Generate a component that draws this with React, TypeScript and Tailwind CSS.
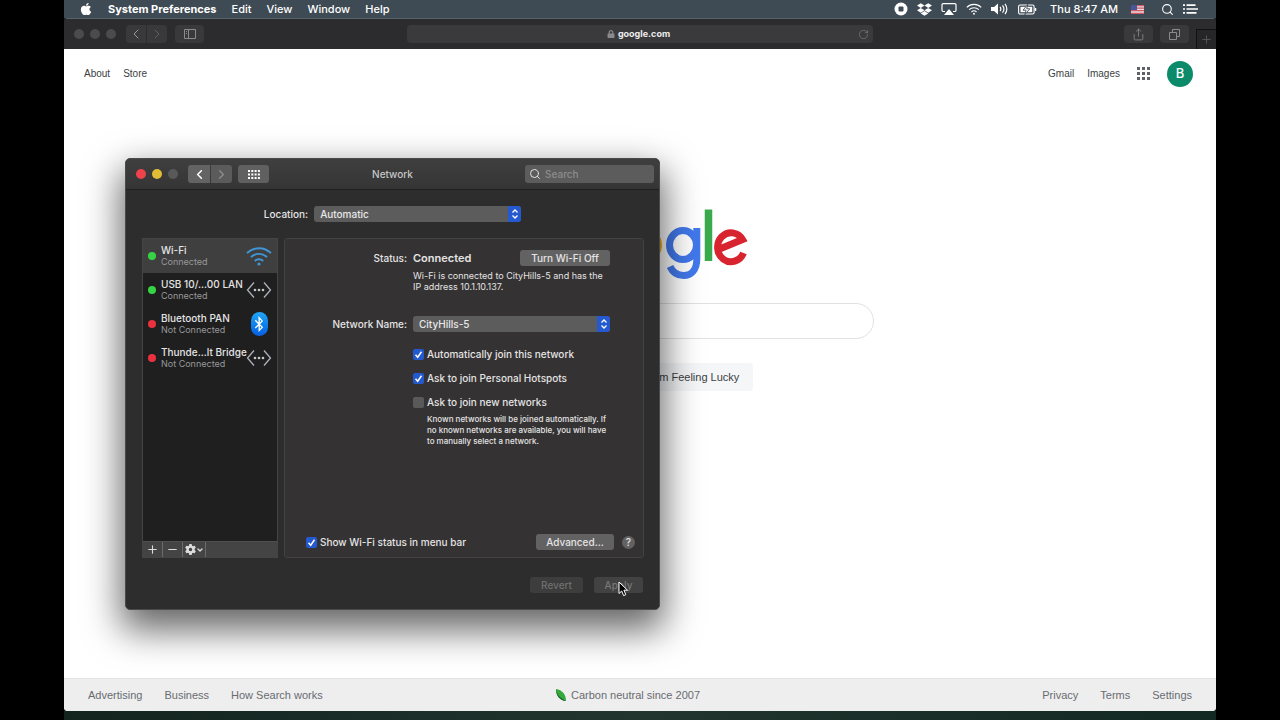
import type { ReactNode } from 'react'
import { ChevronDown, ChevronLeft, ChevronRight, Minus, Plus, RotateCw, Search, Share } from 'lucide-react'
import { FaApple, FaBluetoothB, FaDropbox, FaLock } from 'react-icons/fa'
import { FaGear } from 'react-icons/fa6'

interface Service {
    name: string
    status: string
    online: boolean
    icon: ReactNode
}

const WifiIcon = ({ className }: { className: string }) => (
    <svg viewBox="0 0 26 20" fill="none" stroke="currentColor" className={className}>
        <path d="M1 7.2a17 17 0 0 1 24 0" strokeWidth="1.9" />
        <path d="M5 11.2a11.3 11.3 0 0 1 16 0" strokeWidth="1.9" />
        <path d="M8.8 15a6 6 0 0 1 8.4 0" strokeWidth="1.9" />
        <circle cx="13" cy="18" r="1.6" fill="currentColor" stroke="none" />
    </svg>
)

const EthernetIcon = () => (
    <svg viewBox="0 0 26 18" fill="none" stroke="#aeb2bb" strokeWidth="1.3" className="h-[18px] w-[26px]">
        <path d="M8 1.5 1.5 9 8 16.5M18 1.5 24.5 9 18 16.5" />
        <g fill="#c4c6cc" stroke="none">
            <circle cx="9" cy="9" r="1.3" />
            <circle cx="13" cy="9" r="1.3" />
            <circle cx="17" cy="9" r="1.3" />
        </g>
    </svg>
)

const BluetoothIcon = () => (
    <div className="flex h-6 w-[17px] items-center justify-center rounded-full bg-gradient-to-b from-[#23a6f7] to-[#0a5fe0] text-white">
        <FaBluetoothB size={16} />
    </div>
)

const services: Service[] = [
    { name: 'Wi-Fi', status: 'Connected', online: true, icon: <WifiIcon className="h-5 w-[26px] text-[#3f97d6]" /> },
    { name: 'USB 10/...00 LAN', status: 'Connected', online: true, icon: <EthernetIcon /> },
    { name: 'Bluetooth PAN', status: 'Not Connected', online: false, icon: <BluetoothIcon /> },
    { name: 'Thunde...lt Bridge', status: 'Not Connected', online: false, icon: <EthernetIcon /> },
]

const RecordIcon = () => (
    <svg viewBox="0 0 14 14" className="size-[14px]">
        <circle cx="7" cy="7" r="6.5" fill="white" />
        <rect x="4.5" y="4.5" width="5" height="5" rx="1" fill="#3e4a54" />
    </svg>
)

const AirplayIcon = () => (
    <svg viewBox="0 0 16 12" fill="none" stroke="white" strokeWidth="1.2" className="h-3 w-4">
        <path d="M4 8.5H2.2A1.2 1.2 0 0 1 1 7.3V1.8A1.2 1.2 0 0 1 2.2.6h11.6A1.2 1.2 0 0 1 15 1.8v5.5a1.2 1.2 0 0 1-1.2 1.2H12" />
        <path d="M8 6 13 12H3Z" fill="white" stroke="none" />
    </svg>
)

const VolumeIcon = () => (
    <svg viewBox="0 0 18 12" fill="none" stroke="white" strokeWidth="1.2" className="h-3 w-[18px]">
        <path d="M0 4h3l4-3.5v11L3 8H0Z" fill="white" stroke="none" />
        <path d="M9 4a3 3 0 0 1 0 4M11.5 2.3a6 6 0 0 1 0 7.4M14 .8a9 9 0 0 1 0 10.4" />
    </svg>
)

const BatteryIcon = () => (
    <svg viewBox="0 0 19 11" fill="none" stroke="white" className="h-[11px] w-[19px]">
        <rect x=".6" y="1" width="15.5" height="9" rx="1.5" strokeWidth="1.1" />
        <rect x="2.5" y="2.8" width="11.7" height="5.4" fill="white" stroke="none" />
        <path d="M17.5 4v3" strokeWidth="1.5" />
        <path d="M9.8.3 5 6.2h3L6.9 10.7 11.8 4.8H8.7Z" fill="white" stroke="#3e4a54" strokeWidth=".9" />
    </svg>
)

const ListIcon = () => (
    <svg viewBox="0 0 15 10" stroke="white" strokeWidth="1.7" className="h-2.5 w-[15px]">
        <path d="M0 1.2h2M3.5 1.2h9M0 5h2M3.5 5H15M0 8.8h2M3.5 8.8h10" />
    </svg>
)

const Flag = () => (
    <svg viewBox="0 0 13 9" className="h-[9px] w-[13px]">
        <rect width="13" height="9" fill="#e9d9dc" />
        <path d="M0 .6h13M0 3.1h13M0 5.7h13M0 8.3h13" stroke="#cf5a66" strokeWidth="1.2" />
        <rect width="6" height="5" fill="#46589a" />
    </svg>
)

const MenuBar = () => (
    <header className="flex h-[18px] items-center justify-between bg-[#3e4a54] pr-[18px] pl-[15px] text-[11px] font-medium text-white">
        <nav className="flex items-center gap-[15px]">
            <FaApple size={14} />
            <span className="font-bold">System Preferences</span>
            <span>Edit</span>
            <span>View</span>
            <span>Window</span>
            <span>Help</span>
        </nav>
        <div className="flex items-center gap-[9px]">
            <RecordIcon />
            <FaDropbox size={15} />
            <AirplayIcon />
            <WifiIcon className="h-3 w-4" />
            <VolumeIcon />
            <BatteryIcon />
            <span className="pr-1 pl-1">Thu 8:47 AM</span>
            <Flag />
            <Search size={13} className="ml-2" />
            <ListIcon />
        </div>
    </header>
)

const BrowserButton = ({ label, children }: { label: string, children: ReactNode }) => (
    <button aria-label={label} className="flex h-[18px] w-[29px] items-center justify-center rounded bg-[#39393b] text-[#8b8b8d]">{children}</button>
)

const BrowserToolbar = () => (
    <div className="flex h-[31px] items-center border-t border-[#59616a] bg-[#2c2c2e]">
        <div className="flex flex-1 items-center">
            <div className="ml-2.5 flex gap-1.5">
                <span className="size-2.5 rounded-full bg-[#4b4b4d]" />
                <span className="size-2.5 rounded-full bg-[#4b4b4d]" />
                <span className="size-2.5 rounded-full bg-[#4b4b4d]" />
            </div>
            <div className="mr-2 ml-2.5 flex gap-px">
                <button aria-label="Back" className="flex h-[18px] w-5 items-center justify-center rounded-l bg-[#39393b] text-[#98989a]"><ChevronLeft size={16} strokeWidth={1.5} /></button>
                <button aria-label="Forward" className="flex h-[18px] w-5 items-center justify-center rounded-r bg-[#39393b] text-[#606062]"><ChevronRight size={16} strokeWidth={1.5} /></button>
            </div>
            <BrowserButton label="Sidebar">
                <svg viewBox="0 0 12 10" fill="none" stroke="currentColor" className="h-2.5 w-3">
                    <path d="M.5.5h11v9H.5ZM4.5.5v9M2 2.5h1M2 4.5h1" />
                </svg>
            </BrowserButton>
        </div>
        <div className="flex h-[18px] w-[466px] items-center rounded bg-[#3a3a3c] px-1">
            <div className="flex flex-1 items-center justify-center gap-[3px] pl-2 text-[9px] font-bold text-[#ececec]">
                <FaLock size={8} className="text-[#8a8a8c]" />
                google.com
            </div>
            <button aria-label="Reload" className="text-[#7d7d7f]"><RotateCw size={11} strokeWidth={1.5} /></button>
        </div>
        <div className="flex flex-1 items-center justify-end gap-[7px] self-stretch">
            <BrowserButton label="Share"><Share size={13} strokeWidth={1.5} /></BrowserButton>
            <BrowserButton label="Show tabs">
                <svg viewBox="0 0 11 11" fill="none" stroke="currentColor" className="size-[11px]">
                    <path d="M.5 3.5h7v7h-7ZM3.5 3.5v-3h7v7h-3" />
                </svg>
            </BrowserButton>
            <button aria-label="New tab" className="flex h-5 w-5 items-center justify-center self-end border-t border-l border-[#111112] bg-[#262628] text-[#5c5c5e]"><Plus size={13} strokeWidth={1.5} /></button>
        </div>
    </div>
)

const GoogleLogo = () => (
    <svg viewBox="0 0 215 72" fill="none" strokeWidth="7" className="h-[72px] w-[215px]" role="img" aria-label="Google">
        <path d="M46 13A24 24 0 1 0 51.5 33H28" stroke="#4279ec" />
        <circle cx="73" cy="36" r="14.5" stroke="#d8242e" />
        <circle cx="111" cy="36" r="14.5" stroke="#f0b51c" />
        <ellipse cx="150" cy="36" rx="13.5" ry="14.5" stroke="#4279ec" />
        <path d="M163.8 19V50C163.8 61 158 66.5 150.5 66.5C144 66.5 139.5 63 137 57.5" stroke="#4279ec" />
        <path d="M175.5 .5V52" stroke="#3aab4c" strokeWidth="7.5" />
        <path d="M210.5 44A13.5 14.5 0 1 1 209.5 30.5L186 40.3" stroke="#d8242e" />
    </svg>
)

const GooglePage = () => (
    <div className="flex flex-1 flex-col bg-white font-['Liberation_Sans',Arial,sans-serif] text-[11px] text-[#3c4043]">
        <div className="flex h-[49px] items-center justify-between pr-[23px] pl-5 text-[10px]">
            <div className="flex gap-[13px]">
                <a href="#about">About</a>
                <a href="#store">Store</a>
            </div>
            <div className="flex items-center gap-[13px]">
                <a href="#gmail">Gmail</a>
                <a href="#images">Images</a>
                <svg viewBox="0 0 13 13" fill="#5f6368" className="mx-1 size-[13px]">
                    {[0, 5, 10].map((y) => [0, 5, 10].map((x) => <rect key={`${x}-${y}`} x={x} y={y} width="3" height="3" />))}
                </svg>
                <button className="flex size-[26px] items-center justify-center rounded-full bg-[#0b8b6a] font-['Inter',sans-serif] text-[13px] font-medium text-white">B</button>
            </div>
        </div>
        <div className="flex flex-1 flex-col items-center pt-[111px]">
            <GoogleLogo />
            <input aria-label="Search Google" className="mt-[22px] h-9 w-[467px] rounded-full border border-[#dfe1e5] px-4 outline-none" />
            <div className="mt-6 flex gap-3">
                <button className="h-7 rounded bg-[#f5f6f8] px-3.5">Google Search</button>
                <button className="h-7 rounded bg-[#f5f6f8] px-3.5">I'm Feeling Lucky</button>
            </div>
        </div>
        <footer className="flex h-[33px] items-center border-t border-[#e2e2e2] bg-[#eeeeee] px-6 text-[#686c71]">
            <div className="flex flex-1 gap-[22px]">
                <a href="#advertising">Advertising</a>
                <a href="#business">Business</a>
                <a href="#how">How Search works</a>
            </div>
            <a href="#carbon" className="flex items-center gap-1 pr-6">
                <svg viewBox="0 0 11 12" className="h-3 w-[11px]">
                    <path d="M0 0C6 1 10 5 10 12C4 11 0 7 0 0Z" fill="#35a83c" />
                    <path d="M0 0C1 6 4 9 10 12C4 11.5 0 7 0 0Z" fill="#155f2c" />
                </svg>
                Carbon neutral since 2007
            </a>
            <div className="flex flex-1 justify-end gap-[22px]">
                <a href="#privacy">Privacy</a>
                <a href="#terms">Terms</a>
                <a href="#settings">Settings</a>
            </div>
        </footer>
    </div>
)

const PopUp = ({ id, value, className }: { id: string, value: string, className: string }) => (
    <div className={`relative h-4 ${className}`}>
        <select id={id} className="block h-4 w-full appearance-none rounded-[3px] bg-[#5d5c5d] pl-1.5 text-[10px] leading-4 font-medium text-[#e8e8e8] outline-none">
            <option>{value}</option>
        </select>
        <span className="pointer-events-none absolute inset-y-0 right-0 flex w-[13px] items-center justify-center rounded-r-[3px] bg-[#2459cf]">
            <svg viewBox="0 0 8 12" fill="none" stroke="white" strokeWidth="1.3" className="h-3 w-2">
                <path d="M1.5 4.5 4 2l2.5 2.5M1.5 7.5 4 10l2.5-2.5" />
            </svg>
        </span>
    </div>
)

const CheckBox = ({ label, checked = false }: { label: string, checked?: boolean }) => (
    <label className="flex items-center gap-[3px] leading-4">
        <span className="grid size-[11px]">
            <input type="checkbox" defaultChecked={checked} className="peer col-start-1 row-start-1 size-[11px] appearance-none rounded-[2px] bg-[#5a595a] checked:bg-[#2459cf]" />
            <svg viewBox="0 0 11 11" fill="none" stroke="white" strokeWidth="1.5" className="pointer-events-none invisible col-start-1 row-start-1 size-[11px] peer-checked:visible">
                <path d="M2.5 5.8 4.7 8.2 8.5 2.8" />
            </svg>
        </span>
        {label}
    </label>
)

const ServiceList = () => (
    <div className="flex w-[136px] flex-col border border-[#454546] bg-[#1f1f1f]">
        <ul className="flex-1">
            {services.map((service, index) => (
                <li key={service.name} className={`flex h-[34px] items-center px-[5px] ${index === 0 ? 'bg-[#3f3f40]' : ''}`}>
                    <span className={`mr-[5px] size-2 shrink-0 rounded-full ${service.online ? 'bg-[#36d344]' : 'bg-[#e93140]'}`} />
                    <div className="w-[85px] pb-0.5 whitespace-nowrap">
                        <p className="text-[10px] leading-3 text-[#e4e4e4]">{service.name}</p>
                        <p className="text-[9px] leading-[11px] font-normal text-[#98989a]">{service.status}</p>
                    </div>
                    <div className="flex w-[26px] shrink-0 justify-center">{service.icon}</div>
                </li>
            ))}
        </ul>
        <div className="flex h-4 divide-x divide-[#6a6a6a] border-t border-[#505050] bg-[#444445] text-[#dcdcdc]">
            <button aria-label="Add service" className="flex w-5 items-center justify-center"><Plus size={13} strokeWidth={2} /></button>
            <button aria-label="Remove service" className="flex w-5 items-center justify-center"><Minus size={13} strokeWidth={2} /></button>
            <button aria-label="Service actions" className="flex w-[23px] items-center justify-center"><FaGear size={11} /><ChevronDown size={8} strokeWidth={4} /></button>
            <span />
        </div>
    </div>
)

const NetworkDetails = () => (
    <div className="flex flex-1 flex-col rounded-[3px] border border-[#434142] bg-[#353233]">
        <div className="grid grid-cols-[122px_1fr] gap-x-1.5 pt-[11px] pr-[33px]">
            <span className="text-right leading-4">Status:</span>
            <div>
                <div className="flex items-center justify-between">
                    <strong className="text-[11px] leading-4 font-semibold">Connected</strong>
                    <button className="h-4 w-[90px] rounded-[3px] bg-[#636263] leading-4">Turn Wi-Fi Off</button>
                </div>
                <p className="mt-1 text-[9px] leading-[11px] font-normal whitespace-nowrap">Wi-Fi is connected to CityHills-5 and has the<br />IP address 10.1.10.137.</p>
            </div>
            <label htmlFor="network-name" className="mt-6 text-right leading-4 whitespace-nowrap">Network Name:</label>
            <PopUp id="network-name" value="CityHills-5" className="mt-6" />
            <div className="col-start-2 mt-3.5 flex flex-col gap-2">
                <CheckBox label="Automatically join this network" checked />
                <CheckBox label="Ask to join Personal Hotspots" checked />
                <CheckBox label="Ask to join new networks" />
            </div>
            <p className="col-start-2 mt-1 pl-3.5 text-[8px] leading-[11px] whitespace-nowrap">Known networks will be joined automatically. If<br />no known networks are available, you will have<br />to manually select a network.</p>
        </div>
        <div className="mt-auto flex items-center pr-2 pb-[7px] pl-[21px]">
            <CheckBox label="Show Wi-Fi status in menu bar" checked />
            <button className="ml-auto h-4 w-[78px] rounded-[3px] bg-[#636263] leading-4">Advanced...</button>
            <button aria-label="Help" className="ml-2 flex size-[13px] items-center justify-center rounded-full bg-[#636263]">?</button>
        </div>
    </div>
)

const NetworkWindow = () => (
    <section className="absolute top-[158px] left-[61px] w-[535px] rounded-[5px] border border-[#4a4a4a] bg-[#2d2d2d] text-[10px] font-medium text-[#e4e4e4] shadow-[0_16px_36px_4px_rgba(0,0,0,0.6)]">
        <div className="flex h-[31px] items-center rounded-t-[4px] border-b border-[#1f1f1f] bg-gradient-to-b from-[#3f3f3f] to-[#353535] px-[5px]">
            <div className="flex flex-1 items-center">
                <div className="ml-[5px] flex gap-1.5">
                    <button aria-label="Close" className="size-2.5 rounded-full bg-[#f0424a]" />
                    <button aria-label="Minimize" className="size-2.5 rounded-full bg-[#dfbe35]" />
                    <button aria-label="Zoom" className="size-2.5 rounded-full bg-[#595959]" />
                </div>
                <div className="mr-1.5 ml-2.5 flex gap-px">
                    <button aria-label="Back" className="flex h-[18px] w-[22px] items-center justify-center rounded-l-[3px] bg-[#636363] text-white"><ChevronLeft size={15} strokeWidth={2.5} /></button>
                    <button aria-label="Forward" className="flex h-[18px] w-[21px] items-center justify-center rounded-r-[3px] bg-[#5b5b5b] text-[#8e8e8e]"><ChevronRight size={15} /></button>
                </div>
                <button aria-label="Show all" className="flex h-[18px] w-[31px] items-center justify-center rounded-[3px] bg-[#606060]">
                    <svg viewBox="0 0 12 9" fill="white" className="h-[9px] w-3">
                        {[0, 3.5, 7].map((y) => [0, 3.3, 6.6, 9.9].map((x) => <rect key={`${x}-${y}`} x={x} y={y} width="2" height="2" />))}
                    </svg>
                </button>
            </div>
            <h1 className="text-[#c6c6c6]">Network</h1>
            <div className="flex flex-1 justify-end">
                <label className="flex h-[18px] w-[129px] items-center gap-1 rounded-[3px] bg-[#5c5c5c] px-1">
                    <Search size={12} className="shrink-0" />
                    <input type="search" aria-label="Search" placeholder="Search" className="w-full min-w-0 bg-transparent outline-none placeholder:text-[#8c8c8c]" />
                </label>
            </div>
        </div>
        <div className="flex items-center justify-center gap-1.5 pt-4 leading-4">
            <label htmlFor="location">Location:</label>
            <PopUp id="location" value="Automatic" className="w-[207px]" />
        </div>
        <div className="mt-4 mr-[15px] ml-4 flex h-80 gap-1.5">
            <ServiceList />
            <NetworkDetails />
        </div>
        <div className="flex justify-end gap-[11px] px-4 pt-[19px] pb-4">
            <button disabled className="h-4 w-[53px] rounded-[3px] bg-[#3d3d3d] leading-4 text-[#6f6f6f]">Revert</button>
            <button disabled className="h-4 w-[49px] rounded-[3px] bg-[#424242] leading-4 text-[#777777]">Apply</button>
        </div>
        <svg viewBox="0 0 11 16" className="absolute right-[30px] bottom-3 h-4 w-[11px]">
            <path d="M1 1V12.5L3.7 10 5.6 14.6 7.8 13.7 5.9 9.2H9.5Z" fill="black" stroke="white" />
        </svg>
    </section>
)

export default function App() {
    return <div className="flex min-h-screen bg-black px-16 font-['Inter',sans-serif]">
        <main className="relative flex min-w-0 flex-1 flex-col bg-gradient-to-r from-[#13241f] via-[#22352f] to-[#122823] pb-[9px]">
            <MenuBar />
            <div className="flex flex-1 flex-col overflow-hidden rounded-[4px]">
                <BrowserToolbar />
                <GooglePage />
            </div>
            <NetworkWindow />
        </main>
    </div>
}
